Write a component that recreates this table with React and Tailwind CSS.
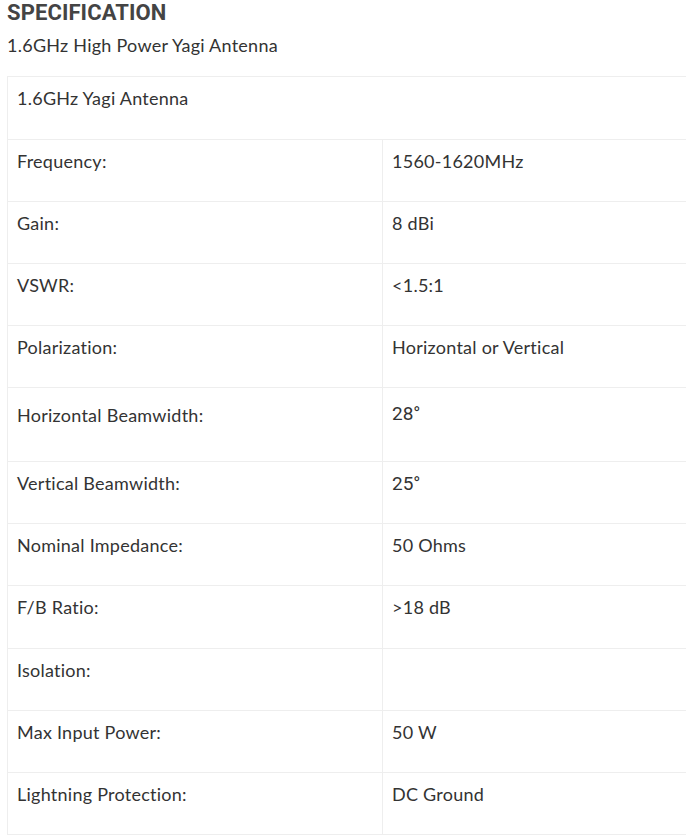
export default function App() {
  const rows = [
    ["Frequency:", "1560-1620MHz", "h-[62px]"],
    ["Gain:", "8 dBi", "h-[62px]"],
    ["VSWR:", "<1.5:1", "h-[62px]"],
    ["Polarization:", "Horizontal or Vertical", "h-[62px]"],
    ["Horizontal Beamwidth:", "28°", "h-[74px]", "big"],
    ["Vertical Beamwidth:", "25°", "h-[62px]", "deg"],
    ["Nominal Impedance:", "50 Ohms", "h-[62px]"],
    ["F/B Ratio:", ">18 dB", "h-[63px]"],
    ["Isolation:", "", "h-[62px]"],
    ["Max Input Power:", "50 W", "h-[62px]"],
    ["Lightning Protection:", "DC Ground", "h-[62px]"],
  ];
  return (
    <div className="bg-white w-[686px] h-[836px] overflow-hidden pl-[7px] text-[#333333] font-['Lato',sans-serif]">
      <h2 className="font-['Roboto',sans-serif] font-bold text-[22px] leading-[26px] tracking-[0.1px] text-[#444444] uppercase">Specification</h2>
      <p className="text-[18px] leading-[24px] tracking-[0.25px] mt-[7px] mb-[19px]">1.6GHz High Power Yagi Antenna</p>
      <div className="w-[700px] border-t border-l border-[#eeeeee] text-[18px] leading-[24px] tracking-[0.25px]">
        <div className="h-[63px] border-b border-[#eeeeee] px-[9px] pt-[9px]">1.6GHz Yagi Antenna</div>
        {rows.map(([k, v, h, kind]) => (
          <div key={k} className={`flex border-b border-[#eeeeee] ${h}`}>
            <div className={`w-[375px] shrink-0 border-r border-[#eeeeee] px-[9px] ${kind === "big" ? "pt-[15px]" : "pt-[9px]"}`}>{k}</div>
            <div className={`flex-1 px-[9px] ${kind ? "font-['Roboto',sans-serif] text-[19px] tracking-normal" : ""} ${kind === "big" ? "pt-[14px]" : kind === "deg" ? "pt-[10px]" : "pt-[9px]"}`}>{v}</div>
          </div>
        ))}
      </div>
    </div>
  );
}
